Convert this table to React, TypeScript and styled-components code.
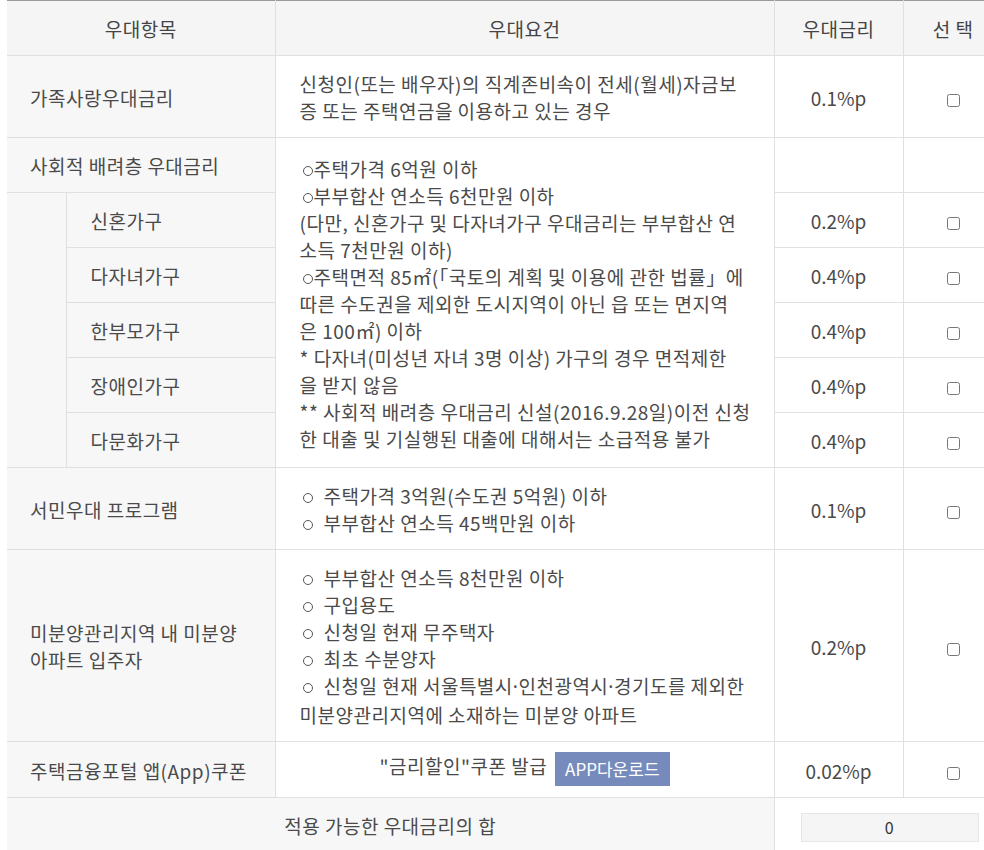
import React from 'react'
import styled, { createGlobalStyle } from 'styled-components'

const GlobalStyle = createGlobalStyle`
  html, body {
    margin: 0;
    padding: 0;
    background: #fff;
    overflow: hidden;
  }
  body {
    font-family: "Noto Sans CJK KR", "Noto Sans", sans-serif;
    color: #4a4a4a;
  }
`

const Page = styled.div`
  padding: 0 0 0 7px;
  width: 1010px;
`

const Table = styled.table`
  width: 996px;
  border-collapse: collapse;
  table-layout: fixed;
  border-top: 1px solid #999;
  font-size: 19px;
  line-height: 27px;
  letter-spacing: 0.5px;
`

const HeadCell = styled.th`
  height: 54px;
  padding: 0;
  background: #f5f5f5;
  border: 1px solid #e0e0e0;
  border-top: 0;
  font-weight: 400;
  color: #444;
  text-align: center;
  vertical-align: middle;
  &:first-child {
    border-left: 0;
  }
`

const Cell = styled.td<{ $align?: 'left' | 'center'; $tint?: boolean; $tight?: boolean }>`
  padding: ${p => (p.$tight ? '10px 24px 11px' : '14px 24px 13px')};
  border: 1px solid #e0e0e0;
  text-align: ${p => p.$align || 'left'};
  vertical-align: middle;
  white-space: nowrap;
  background: ${p => (p.$tint ? '#f7f7f7' : '#fff')};
  &:first-child {
    border-left: 0;
  }
`

const Label = styled(Cell).attrs({ $tint: true })`
  padding-left: 23px;
  height: 27px;
`

const SubLabel = styled(Cell).attrs({ $tint: true })`
  height: 27px;
`

const Indent = styled.td`
  padding: 0;
  background: #f7f7f7;
  border: 1px solid #e0e0e0;
  border-left: 0;
  border-top: 0;
`

const Rate = styled(Cell).attrs({ $align: 'center' })`
  padding-left: 0;
  padding-right: 0;
  letter-spacing: 0;
`

const Select = styled(Cell).attrs({ $align: 'center' })`
  padding-left: 0;
  padding-right: 0;
  input {
    margin: 0;
    width: 13px;
    height: 13px;
    vertical-align: -1px;
  }
`

const Bullet = styled.span<{ $gap?: number }>`
  display: inline-block;
  width: 8px;
  height: 8px;
  border: 1px solid #555;
  border-radius: 50%;
  margin: 0 ${p => p.$gap ?? 4}px 0 3px;
  vertical-align: 1px;
`

const Dot = styled.span`
  font-family: "Noto Sans", sans-serif;
`

const AppButton = styled.span`
  display: inline-block;
  margin-left: 8px;
  padding: 0 10px;
  height: 34px;
  line-height: 34px;
  background: #768bbc;
  color: #fff;
  font-size: 17px;
  letter-spacing: 0;
  vertical-align: middle;
`

const SumCell = styled.td`
  padding: 15px 25px 8px 26px;
  border: 1px solid #e0e0e0;
  border-bottom: 0;
  vertical-align: top;
`

const SumBox = styled.div`
  width: 176px;
  height: 27px;
  line-height: 27px;
  border: 1px solid #e6e6e6;
  background: #f5f5f5;
  text-align: center;
  font-size: 16px;
  color: #333;
`

const TotalLabel = styled.td`
  padding: 14px 0;
  height: 27px;
  background: #f7f7f7;
  border-right: 1px solid #e0e0e0;
  text-align: center;
  vertical-align: middle;
`

const Box = () => <input type="checkbox" />

const subRows = [
  { label: '신혼가구', rate: '0.2%p' },
  { label: '다자녀가구', rate: '0.4%p' },
  { label: '한부모가구', rate: '0.4%p' },
  { label: '장애인가구', rate: '0.4%p' },
  { label: '다문화가구', rate: '0.4%p' },
]

export default function App() {
  return (
    <Page>
      <GlobalStyle />
      <Table>
        <colgroup>
          <col style={{ width: 59 }} />
          <col style={{ width: 209 }} />
          <col style={{ width: 499 }} />
          <col style={{ width: 129 }} />
          <col style={{ width: 100 }} />
        </colgroup>
        <thead>
          <tr>
            <HeadCell colSpan={2}>우대항목</HeadCell>
            <HeadCell>우대요건</HeadCell>
            <HeadCell>우대금리</HeadCell>
            <HeadCell>선 택</HeadCell>
          </tr>
        </thead>
        <tbody>
          <tr>
            <Label colSpan={2}>가족사랑우대금리</Label>
            <Cell>
              신청인(또는 배우자)의 직계존비속이 전세(월세)자금보
              <br />증 또는 주택연금을 이용하고 있는 경우
            </Cell>
            <Rate>0.1%p</Rate>
            <Select>
              <Box />
            </Select>
          </tr>
          <tr>
            <Label colSpan={2}>사회적 배려층 우대금리</Label>
            <Cell rowSpan={6}>
              <Bullet $gap={1} />주택가격 6억원 이하
              <br />
              <Bullet $gap={1} />부부합산 연소득 6천만원 이하
              <br />(다만, 신혼가구 및 다자녀가구 우대금리는 부부합산 연
              <br />소득 7천만원 이하)
              <br />
              <Bullet $gap={1} />주택면적 85㎡(「국토의 계획 및 이용에 관한 법률」에
              <br />따른 수도권을 제외한 도시지역이 아닌 읍 또는 면지역
              <br />은 100㎡) 이하
              <br />* 다자녀(미성년 자녀 3명 이상) 가구의 경우 면적제한
              <br />을 받지 않음
              <br />** 사회적 배려층 우대금리 신설(2016.9.28일)이전 신청
              <br />한 대출 및 기실행된 대출에 대해서는 소급적용 불가
            </Cell>
            <Rate />
            <Select />
          </tr>
          {subRows.map((r, i) => (
            <tr key={r.label}>
              {i === 0 && <Indent rowSpan={5} />}
              <SubLabel>{r.label}</SubLabel>
              <Rate>{r.rate}</Rate>
              <Select>
                <Box />
              </Select>
            </tr>
          ))}
          <tr>
            <Label colSpan={2}>서민우대 프로그램</Label>
            <Cell>
              <Bullet $gap={11} />주택가격 3억원(수도권 5억원) 이하
              <br />
              <Bullet $gap={11} />부부합산 연소득 45백만원 이하
            </Cell>
            <Rate>0.1%p</Rate>
            <Select>
              <Box />
            </Select>
          </tr>
          <tr>
            <Label colSpan={2}>
              미분양관리지역 내 미분양
              <br />아파트 입주자
            </Label>
            <Cell>
              <Bullet $gap={11} />부부합산 연소득 8천만원 이하
              <br />
              <Bullet $gap={11} />구입용도
              <br />
              <Bullet $gap={11} />신청일 현재 무주택자
              <br />
              <Bullet $gap={11} />최초 수분양자
              <br />
              <Bullet $gap={11} />신청일 현재 서울특별시<Dot>·</Dot>인천광역시<Dot>·</Dot>경기도를 제외한
              <br />미분양관리지역에 소재하는 미분양 아파트
            </Cell>
            <Rate>0.2%p</Rate>
            <Select>
              <Box />
            </Select>
          </tr>
          <tr>
            <Label colSpan={2}>주택금융포털 앱(App)쿠폰</Label>
            <Cell $align="center" $tight>
              "금리할인"쿠폰 발급
              <AppButton>APP다운로드</AppButton>
            </Cell>
            <Rate>0.02%p</Rate>
            <Select>
              <Box />
            </Select>
          </tr>
          <tr>
            <TotalLabel colSpan={3}>적용 가능한 우대금리의 합</TotalLabel>
            <SumCell colSpan={2}>
              <SumBox>0</SumBox>
            </SumCell>
          </tr>
        </tbody>
      </Table>
    </Page>
  )
}
